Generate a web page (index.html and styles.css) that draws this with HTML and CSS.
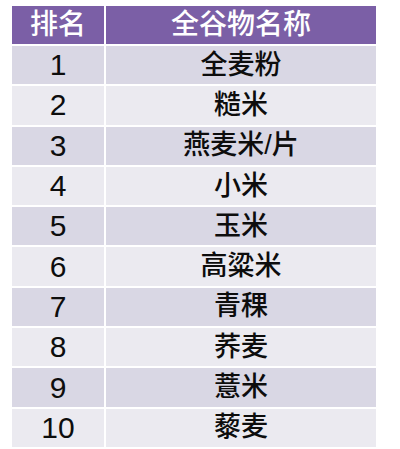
FILE: index.html
```html
<!DOCTYPE html>
<html lang="zh">
<head>
<meta charset="utf-8">
<link rel="stylesheet" href="styles.css">
</head>
<body>
<div class="table">
  <div class="cell head">排名</div><div class="cell head">全谷物名称</div>
  <div class="cell odd num">1</div><div class="cell odd">全麦粉</div>
  <div class="cell even num">2</div><div class="cell even">糙米</div>
  <div class="cell odd num">3</div><div class="cell odd">燕麦米/片</div>
  <div class="cell even num">4</div><div class="cell even">小米</div>
  <div class="cell odd num">5</div><div class="cell odd">玉米</div>
  <div class="cell even num">6</div><div class="cell even">高粱米</div>
  <div class="cell odd num">7</div><div class="cell odd">青稞</div>
  <div class="cell even num">8</div><div class="cell even">荞麦</div>
  <div class="cell odd num">9</div><div class="cell odd">薏米</div>
  <div class="cell even num">10</div><div class="cell even">藜麦</div>
</div>
</body>
</html>
```
FILE: styles.css
```css
html, body { margin: 0; padding: 0; background: #fff; }
body { padding: 6px 0 0 12px; overflow: hidden; height: 449px; box-sizing: border-box; }
.table {
  display: grid;
  grid-template-columns: 92px 270px;
  grid-template-rows: 38px repeat(10, 38.3px);
  column-gap: 2px;
  row-gap: 2px;
  font-family: "Liberation Sans", "Noto Sans CJK SC", sans-serif;
}
.cell {
  display: flex;
  align-items: center;
  justify-content: center;
  font-size: 27px;
  font-weight: 500;
  color: #0d0d0d;
  line-height: 1;
}
.head { background: #7b5fa6; color: #fff; font-size: 28px; }
.odd { background: #d9d7e4; }
.even { background: #ebeaf0; }
.num { font-size: 30px; font-weight: 400; }
```
